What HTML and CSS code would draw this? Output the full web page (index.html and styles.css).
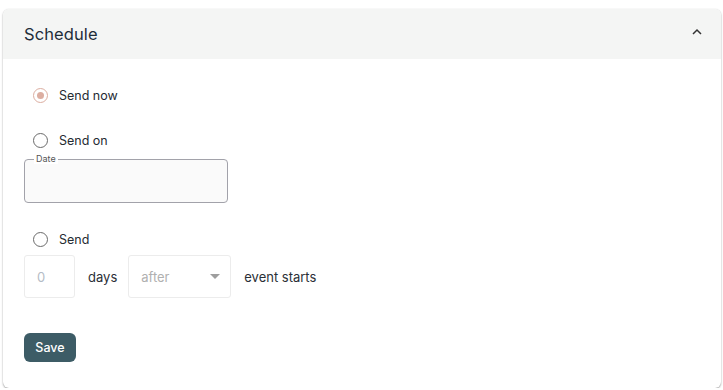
FILE: index.html
```html
<!DOCTYPE html>
<html lang="en">
<head>
  <meta charset="UTF-8" />
  <meta name="viewport" content="width=device-width, initial-scale=1.0" />
  <title>Schedule</title>
  <link rel="stylesheet" href="styles.css">
</head>
<body>
  <div class="card">
    <div class="card-header">
      <span class="card-title">Schedule</span>
      <svg class="chevron" width="12" height="8" viewBox="0 0 12 8"><path d="M2 6 L6 2 L10 6" fill="none" stroke="#333" stroke-width="1.5"/></svg>
    </div>
    <div class="card-body">
      <label class="radio-row first">
        <span class="radio checked"></span>
        <span>Send now</span>
      </label>

      <label class="radio-row">
        <span class="radio"></span>
        <span>Send on</span>
      </label>
      <div class="date-field">
        <span class="legend">Date</span>
      </div>

      <label class="radio-row third">
        <span class="radio"></span>
        <span>Send</span>
      </label>
      <div class="relative-row">
        <div class="num-box">0</div>
        <span class="text">days</span>
        <div class="select-box">
          <span>after</span>
          <svg width="10" height="5" viewBox="0 0 10 5"><path d="M0 0 L10 0 L5 5 Z" fill="#9e9e9e"/></svg>
        </div>
        <span class="text">event starts</span>
      </div>

      <button class="save-btn">Save</button>
    </div>
  </div>
</body>
</html>
```

FILE: styles.css
```css
body {
  margin: 0;
  padding: 9px 2px 0 3px;
  font-family: Inter, "Noto Sans", sans-serif;
  background-color: #fff;
  color: #1f2933;
}

.card {
  border-radius: 6px;
  background-color: #fff;
  box-shadow: 0 1px 2px rgba(0,0,0,0.35), 0 0 1px rgba(0,0,0,0.15);
  height: 379px;
  overflow: hidden;
}

.card-header {
  display: flex;
  justify-content: space-between;
  align-items: center;
  height: 50px;
  padding: 0 18px 0 21px;
  background-color: #f4f5f4;
}

.card-title {
  font-size: 16.5px;
  color: #1f2d3a;
  letter-spacing: 0.1px;
}

.chevron {
  margin-top: -4px;
}

.card-body {
  padding: 0 21px;
}

.radio-row {
  display: flex;
  align-items: center;
  gap: 11px;
  font-size: 12.5px;
  color: #252b33;
  margin: 0 0 0 9px;
  height: 20px;
}

.radio-row.first {
  margin-top: 26px;
  margin-bottom: 25px;
}

.radio-row.third {
  margin-top: 26px;
}

.radio {
  width: 13px;
  height: 13px;
  border: 1.5px solid #6b6b6b;
  border-radius: 50%;
  display: flex;
  align-items: center;
  justify-content: center;
}

.radio.checked {
  border-color: #dcaea1;
}

.radio.checked::after {
  content: "";
  width: 7px;
  height: 7px;
  border-radius: 50%;
  background-color: #dcaea1;
}

.date-field {
  position: relative;
  margin-top: 9px;
  width: 204px;
  height: 44px;
  border: 1px solid #a2a2aa;
  border-radius: 4px;
  background-color: #fafafa;
  box-sizing: border-box;
}

.date-field .legend {
  position: absolute;
  top: -6px;
  left: 9px;
  font-size: 9px;
  color: #555;
  padding: 0 2px;
  line-height: 10px;
  background-color: #fff;
}

.relative-row {
  display: flex;
  align-items: center;
  gap: 13px;
  margin-top: 6px;
  font-size: 13px;
  color: #2a2f36;
}

.num-box {
  width: 51px;
  height: 43px;
  border: 1px solid #ececec;
  border-radius: 3px;
  box-sizing: border-box;
  display: flex;
  align-items: center;
  padding-left: 12px;
  color: #b4bcc6;
}

.text {
  margin-top: 1px;
}

.select-box {
  margin-left: -2px;
  border: 1px solid #ececec;
  border-radius: 3px;
  display: flex;
  align-items: center;
  justify-content: space-between;
  padding: 0 10px 0 12px;
  box-sizing: border-box;
  width: 103px;
  height: 43px;
  color: #b0b0b0;
}

.save-btn {
  margin-top: 35px;
  background-color: #3d5c66;
  color: #fff;
  border: none;
  border-radius: 6px;
  font-family: Inter, "Noto Sans", sans-serif;
  font-size: 12.5px;
  font-weight: 500;
  width: 52px;
  height: 29px;
  cursor: pointer;
}
```
